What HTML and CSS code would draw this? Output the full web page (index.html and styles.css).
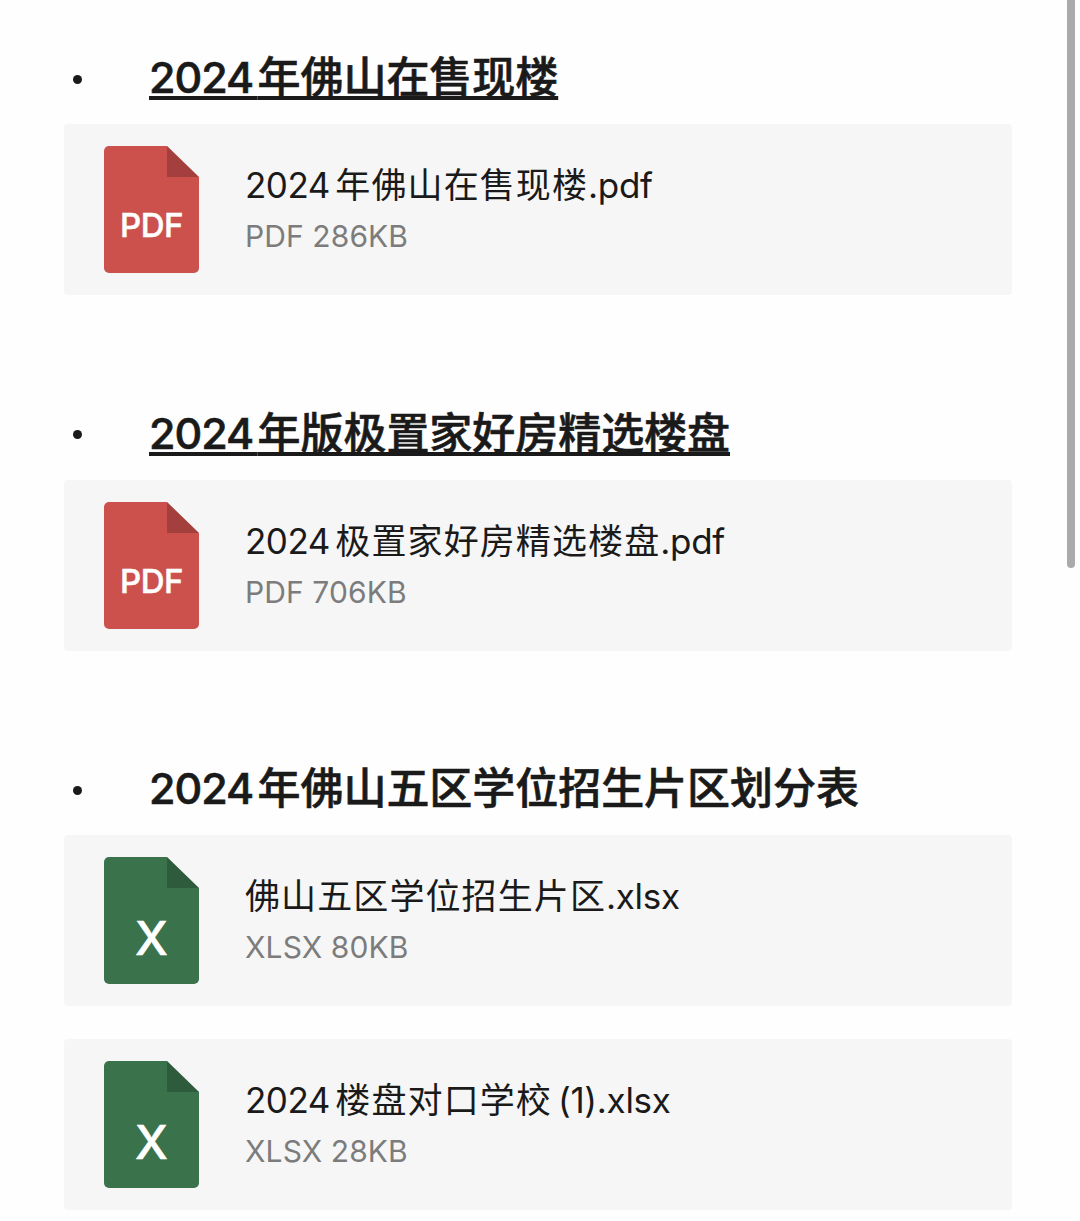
FILE: index.html
```html
<!DOCTYPE html>
<html lang="zh-CN">
<head>
    <meta charset="UTF-8">
    <meta name="viewport" content="width=device-width, initial-scale=1.0">
    <title>2024年佛山楼盘资料</title>
    <link rel="stylesheet" href="styles.css">
</head>
<body>
    <!-- Shared file icon shape -->
    <svg class="defs" width="0" height="0">
        <symbol id="file" viewBox="0 0 95 127">
            <path class="sheet" d="M5 0H63L95 31V122a5 5 0 0 1-5 5H5a5 5 0 0 1-5-5V5a5 5 0 0 1 5-5Z"/>
            <path class="fold" d="M63 0L95 31H63Z"/>
        </symbol>
    </svg>

    <main class="doc">
        <section class="group">
            <h2 class="heading"><span class="dot"></span><span class="title underline"><span class="num">2024 </span>年佛山在售现楼</span></h2>
            <div class="file-card">
                <svg class="icon pdf" viewBox="0 0 95 127">
                    <use href="#file"/>
                    <text x="47.5" y="90.5">PDF</text>
                </svg>
                <div class="info">
                    <div class="name"><span class="num">2024</span>年佛山在售现楼<span class="ext">.pdf</span></div>
                    <div class="meta">PDF 286KB</div>
                </div>
            </div>
        </section>

        <section class="group">
            <h2 class="heading"><span class="dot"></span><span class="title underline"><span class="num">2024 </span>年版极置家好房精选楼盘</span></h2>
            <div class="file-card">
                <svg class="icon pdf" viewBox="0 0 95 127">
                    <use href="#file"/>
                    <text x="47.5" y="90.5">PDF</text>
                </svg>
                <div class="info">
                    <div class="name"><span class="num">2024</span>极置家好房精选楼盘<span class="ext">.pdf</span></div>
                    <div class="meta">PDF 706KB</div>
                </div>
            </div>
        </section>

        <section class="group">
            <h2 class="heading"><span class="dot"></span><span class="title"><span class="num">2024 </span>年佛山五区学位招生片区划分表</span></h2>
            <div class="file-card">
                <svg class="icon xlsx" viewBox="0 0 95 127">
                    <use href="#file"/>
                    <text x="47.5" y="97.5">X</text>
                </svg>
                <div class="info">
                    <div class="name">佛山五区学位招生片区<span class="ext">.xlsx</span></div>
                    <div class="meta">XLSX 80KB</div>
                </div>
            </div>
            <div class="file-card">
                <svg class="icon xlsx" viewBox="0 0 95 127">
                    <use href="#file"/>
                    <text x="47.5" y="97.5">X</text>
                </svg>
                <div class="info">
                    <div class="name"><span class="num">2024</span>楼盘对口学校<span class="ext paren">(1).xlsx</span></div>
                    <div class="meta">XLSX 28KB</div>
                </div>
            </div>
        </section>
    </main>

    <div class="scrollbar"></div>
</body>
</html>
```
FILE: styles.css
```css
* {
    box-sizing: border-box;
}
body {
    margin: 0;
    background: #fefefe;
    color: #1a1a1a;
    font-family: Inter, "Noto Sans CJK SC", sans-serif;
}
.defs {
    display: block;
}
.doc {
    width: 948px;
    margin-left: 64px;
    padding-top: 47px;
}
.group {
    margin-bottom: 107.5px;
}
.group:last-child {
    margin-bottom: 0;
}
.heading {
    display: flex;
    align-items: center;
    height: 60px;
    margin: 0 0 17px;
    font-size: 43px;
    font-weight: 500;
    line-height: 60px;
}
.dot {
    width: 9px;
    height: 9px;
    margin: 4px 67px 0 9px;
    border-radius: 50%;
    background: #1a1a1a;
}
.title {
    letter-spacing: -0.05px;
    white-space: nowrap;
    -webkit-text-stroke: 0.6px #1a1a1a;
}
.title .num {
    letter-spacing: -1px;
    word-spacing: -6.2px;
}
.underline {
    text-decoration: underline;
    text-decoration-thickness: 3.5px;
    text-decoration-skip-ink: none;
    text-underline-offset: 3px;
}
.file-card {
    display: flex;
    height: 171px;
    padding: 22px 39.5px;
    border-radius: 4px;
    background: #f6f6f6;
}
.file-card + .file-card {
    margin-top: 33px;
}
.icon {
    flex: none;
    width: 95px;
    height: 127px;
}
.icon text {
    fill: #fff;
    text-anchor: middle;
}
.sheet {
    fill: currentColor;
}
.fold {
    fill: rgba(0, 0, 0, 0.2);
}
.pdf {
    color: #cc514d;
}
.pdf text {
    font-size: 33px;
    font-weight: 500;
    letter-spacing: -0.5px;
    stroke: #fff;
    stroke-width: 0.5px;
}
.xlsx {
    color: #39724b;
}
.xlsx text {
    font-size: 47px;
    font-weight: 500;
    stroke: #fff;
    stroke-width: 0.5px;
}
.info {
    margin-left: 46.5px;
    padding-top: 14px;
}
.name {
    height: 51px;
    font-size: 35px;
    line-height: 50px;
    letter-spacing: 1.1px;
    white-space: nowrap;
}
.name .num {
    margin-right: 5.5px;
    letter-spacing: -0.5px;
}
.name .ext {
    letter-spacing: -0.3px;
}
.name .paren {
    margin-left: 6px;
}
.meta {
    height: 50px;
    color: #7c7c7c;
    font-size: 30px;
    line-height: 50px;
    letter-spacing: 0.1px;
}
.scrollbar {
    position: fixed;
    top: -10px;
    right: 5px;
    width: 8px;
    height: 578px;
    border-radius: 4px;
    background: #aaa;
}
```
